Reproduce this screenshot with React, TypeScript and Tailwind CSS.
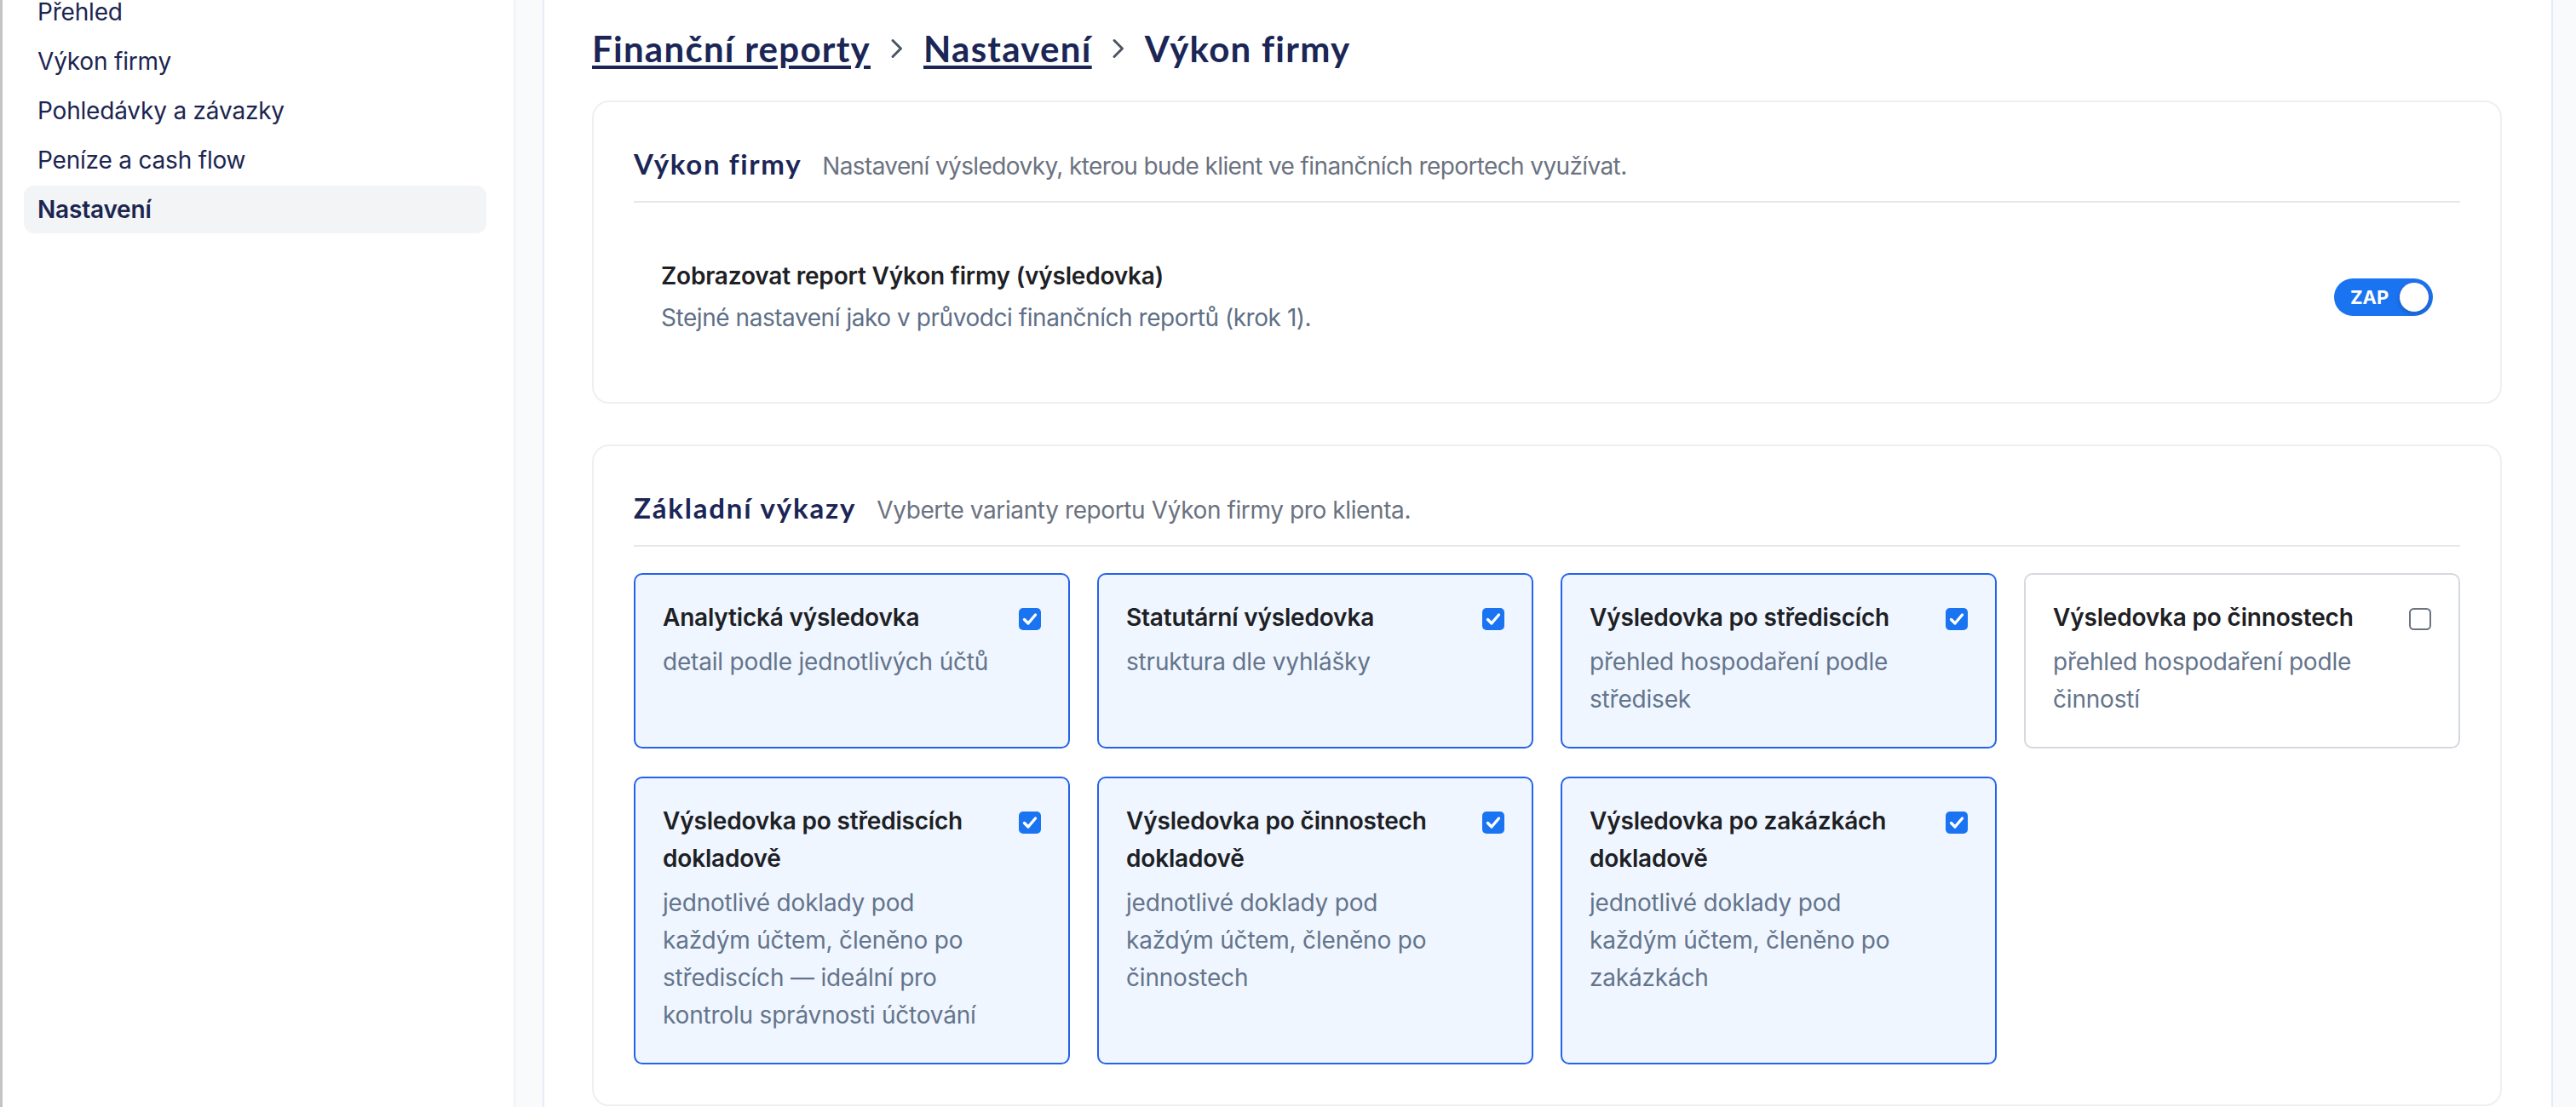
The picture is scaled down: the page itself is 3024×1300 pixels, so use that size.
import React from "react";

type Opt = { title: string; desc: string; checked: boolean };

const options: Opt[] = [
  { title: "Analytická výsledovka", desc: "detail podle jednotlivých účtů", checked: true },
  { title: "Statutární výsledovka", desc: "struktura dle vyhlášky", checked: true },
  { title: "Výsledovka po střediscích", desc: "přehled hospodaření podle středisek", checked: true },
  { title: "Výsledovka po činnostech", desc: "přehled hospodaření podle činností", checked: false },
  {
    title: "Výsledovka po střediscích dokladově",
    desc: "jednotlivé doklady pod každým účtem, členěno po střediscích — ideální pro kontrolu správnosti účtování",
    checked: true,
  },
  {
    title: "Výsledovka po činnostech dokladově",
    desc: "jednotlivé doklady pod každým účtem, členěno po činnostech",
    checked: true,
  },
  {
    title: "Výsledovka po zakázkách dokladově",
    desc: "jednotlivé doklady pod každým účtem, členěno po zakázkách",
    checked: true,
  },
];

const navItems = ["Přehled", "Výkon firmy", "Pohledávky a závazky", "Peníze a cash flow", "Nastavení"];

function Chevron() {
  return (
    <svg width="16" height="24" viewBox="0 0 16 24" fill="none" className="shrink-0">
      <path d="M3 2.5 L12.5 12 L3 21.5" stroke="#4b5563" strokeWidth="3" strokeLinecap="round" strokeLinejoin="round" />
    </svg>
  );
}

function Checkbox({ checked }: { checked: boolean }) {
  if (checked) {
    return (
      <svg width="26" height="26" viewBox="0 0 26 26" className="mt-[11px] shrink-0">
        <rect x="0" y="0" width="26" height="26" rx="5" fill="#1a73f0" />
        <path d="M6.5 13.5 L11 18 L19.5 8" stroke="#ffffff" strokeWidth="3.4" fill="none" strokeLinecap="round" strokeLinejoin="round" />
      </svg>
    );
  }
  return (
    <svg width="26" height="26" viewBox="0 0 26 26" className="mt-[11px] shrink-0">
      <rect x="1" y="1" width="24" height="24" rx="4.5" fill="#ffffff" stroke="#6b7280" strokeWidth="2" />
    </svg>
  );
}

function OptionCard({ o }: { o: Opt }) {
  return (
    <div
      className={
        o.checked
          ? "rounded-[10px] border-2 border-[#2563eb] bg-[#eff6ff] px-[32px] pt-[28px] pb-[34px]"
          : "rounded-[10px] border-2 border-[#d5d9df] bg-white px-[32px] pt-[28px] pb-[34px]"
      }
    >
      <div className="flex items-start gap-4">
        <div className="min-w-0 flex-1">
          <div className="text-[28px] font-semibold leading-[44px] text-[#1d2024]">{o.title}</div>
          <div className="mt-2 text-[28px] leading-[44px] text-[#64748b]">{o.desc}</div>
        </div>
        <Checkbox checked={o.checked} />
      </div>
    </div>
  );
}

export default function App() {
  return (
    <div className="flex h-[1300px] w-[3024px] overflow-hidden bg-white font-['Inter','Noto_Sans',sans-serif] tracking-[-0.012em] text-[#1e2a55]">
      <div className="w-[3px] shrink-0 bg-[#c4c4c4]" />
      <aside className="w-[602px] shrink-0 border-r-2 border-[#f0f1f3] bg-white pl-[25px] pr-[32px]">
        <nav className="-mt-[14px] flex flex-col gap-[2px]">
          {navItems.map((n) => (
            <div
              key={n}
              className={
                n === "Nastavení"
                  ? "rounded-[12px] bg-[#f3f4f6] px-[16px] py-[14px] text-[28px] font-semibold leading-[28px] text-[#1b2550]"
                  : "rounded-[12px] px-[16px] py-[14px] text-[28px] leading-[28px] text-[#1b2550]"
              }
            >
              {n}
            </div>
          ))}
        </nav>
      </aside>
      <div className="w-[34px] shrink-0 border-r-2 border-[#e5edf8] bg-[#f8fafc]" />
      <main className="min-w-0 flex-1 pl-[56px] pr-[58px] pt-[31px]">
        <div className="flex items-center gap-[23px] font-['Lato',sans-serif] text-[42px] font-bold leading-[52px] tracking-[0.03em] text-[#1b2656]">
          <span className="underline decoration-[4px] underline-offset-[4px]">Finanční reporty</span>
          <Chevron />
          <span className="underline decoration-[4px] underline-offset-[4px]">Nastavení</span>
          <Chevron />
          <span>Výkon firmy</span>
        </div>

        <section className="mt-[35px] rounded-[20px] border-2 border-[#efefef] px-[47px] pt-[52px] pb-[47px]">
          <div className="flex items-baseline gap-6 border-b-2 border-[#e5e7eb] pb-[21px]">
            <h2 className="font-['Lato',sans-serif] text-[33px] font-bold leading-[40px] tracking-[0.05em] text-[#1b2656]">
              Výkon firmy
            </h2>
            <p className="text-[28px] leading-[40px] tracking-[-0.022em] text-[#6b7280]">
              Nastavení výsledovky, kterou bude klient ve finančních reportech využívat.
            </p>
          </div>
          <div className="flex items-center justify-between px-8 pt-[66px] pb-[32px]">
            <div>
              <div className="text-[28px] font-semibold leading-[40px] text-[#1d2024]">
                Zobrazovat report Výkon firmy (výsledovka)
              </div>
              <div className="mt-[9px] text-[28px] leading-[40px] tracking-[-0.016em] text-[#5f6f87]">
                Stejné nastavení jako v průvodci finančních reportů (krok 1).
              </div>
            </div>
            <div className="flex h-[44px] w-[116px] items-center justify-between rounded-full bg-[#1a73f0] pl-[19px] pr-[4px]">
              <span className="text-[22px] font-bold leading-none tracking-normal text-white">ZAP</span>
              <span className="h-[36px] w-[36px] rounded-full border border-[#2f62d6] bg-white shadow-[0_2px_4px_rgba(0,0,0,0.18)]" />
            </div>
          </div>
        </section>

        <section className="mt-[48px] rounded-[20px] border-2 border-[#efefef] px-[47px] pt-[52px] pb-[47px]">
          <div className="flex items-baseline gap-6 border-b-2 border-[#e5e7eb] pb-[21px]">
            <h2 className="font-['Lato',sans-serif] text-[33px] font-bold leading-[40px] tracking-[0.055em] text-[#1b2656]">
              Základní výkazy
            </h2>
            <p className="text-[28px] leading-[40px] tracking-[-0.014em] text-[#6b7280]">Vyberte varianty reportu Výkon firmy pro klienta.</p>
          </div>
          <div className="mt-[31px] grid grid-cols-4 gap-x-8 gap-y-[33px]">
            {options.map((o) => (
              <OptionCard key={o.title} o={o} />
            ))}
          </div>
        </section>
      </main>
      <div className="w-[29px] shrink-0 border-l-2 border-[#e5edf8] bg-[#f8fafc]" />
    </div>
  );
}
